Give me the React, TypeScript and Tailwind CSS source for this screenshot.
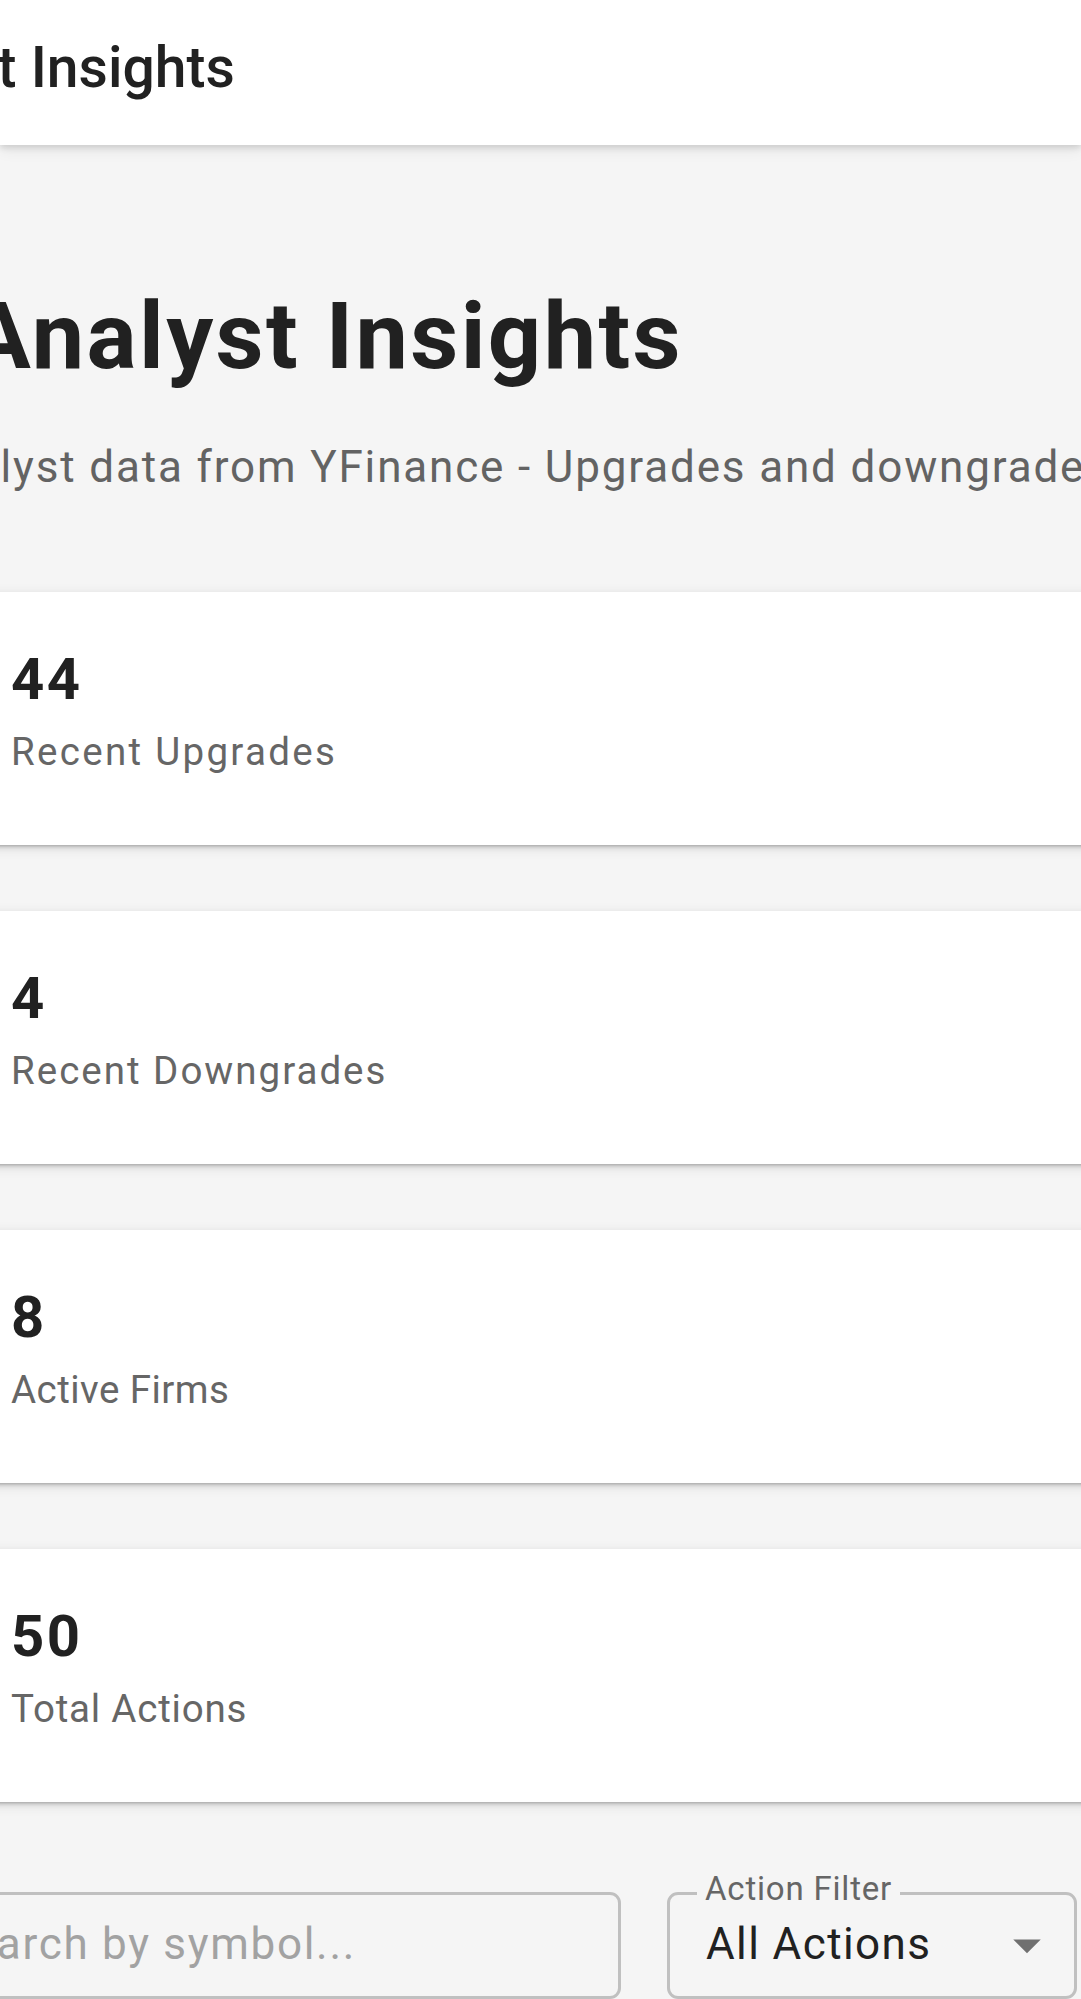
import React from "react";

const cards = [
  { value: "44", label: "Recent Upgrades", track: "tracking-[2.3px]" },
  { value: "4", label: "Recent Downgrades", track: "tracking-[2px]" },
  { value: "8", label: "Active Firms", track: "tracking-[0.45px]" },
  { value: "50", label: "Total Actions", track: "tracking-[0.8px]" },
];

export default function App() {
  return (
    <div
      className="w-[1081px] h-[1999px] overflow-hidden bg-[#f5f5f5] text-[#212121]"
      style={{ fontFamily: "Roboto, 'Noto Sans', sans-serif" }}
    >
      <header className="relative z-10 h-[145px] bg-white pt-[24px] shadow-[0_3px_6px_rgba(0,0,0,0.12),0_6px_14px_rgba(0,0,0,0.06)]">
        <div className="ml-[-174px] whitespace-nowrap text-[57px] font-medium leading-[88px]">
          Analyst Insights
        </div>
      </header>

      <main className="flex flex-col">
        <h1 className="ml-[-32px] mt-[134px] whitespace-nowrap text-[93.5px] font-bold leading-[115.5px] tracking-[2.4px]">
          Analyst Insights
        </h1>
        <p className="ml-[-82px] mt-[39px] whitespace-nowrap text-[44px] leading-[66px] tracking-[1.85px] text-[#636363]">
          Analyst data from YFinance - Upgrades and downgrades from major firms
        </p>

        <div className="ml-[-33px] mt-[92px] flex w-[1300px] flex-col gap-[66px]">
          {cards.map((c) => (
            <div
              key={c.label}
              className="h-[253px] bg-white px-[44px] pt-[43px] shadow-[0_3px_3px_-2px_rgba(0,0,0,0.2),0_2.75px_5.5px_0_rgba(0,0,0,0.12),0_2.75px_12px_0_rgba(0,0,0,0.1)]"
            >
              <div className="text-[58px] font-bold leading-[88px] tracking-[2.5px]">{c.value}</div>
              <div className={`text-[38.5px] leading-[58px] text-[#666666] ${c.track}`}>
                {c.label}
              </div>
            </div>
          ))}
        </div>

        <div className="ml-[-95px] mt-[90px] flex gap-[46px]">
          <div className="flex h-[107px] w-[716px] items-center rounded-[11px] border-[3px] border-[#c0c0c0] px-[36px]">
            <span className="mt-[-2px] whitespace-nowrap text-[44px] leading-[66px] tracking-[1.7px] text-[#a2a2a2]">
              Search by symbol...
            </span>
          </div>
          <div className="relative flex h-[107px] w-[410px] items-center justify-between rounded-[11px] border-[3px] border-[#c0c0c0] pl-[36px] pr-[26px]">
            <span className="absolute left-[27px] top-[-28px] bg-[#f5f5f5] px-[8px] text-[33px] leading-[44px] tracking-[0.8px] text-[#666666]">
              Action Filter
            </span>
            <span className="mt-[-2px] whitespace-nowrap text-[44px] leading-[66px] tracking-[1.4px] text-[#212121]">
              All Actions
            </span>
            <svg width="66" height="66" viewBox="0 0 24 24" className="mr-[-12px]">
              <path d="M7 10l5 5 5-5z" fill="rgba(0,0,0,0.54)" />
            </svg>
          </div>
        </div>
      </main>
    </div>
  );
}
